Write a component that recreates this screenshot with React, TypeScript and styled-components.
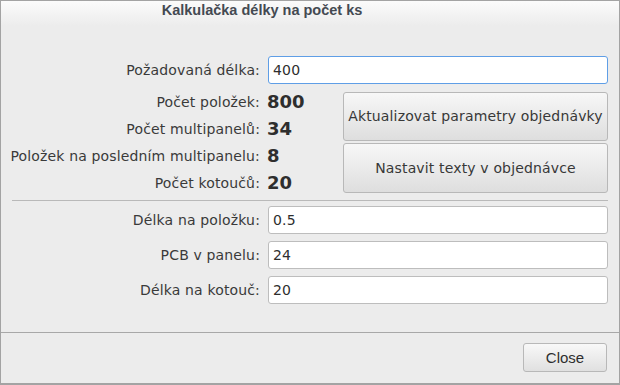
import styled, { createGlobalStyle } from 'styled-components'

const GlobalStyle = createGlobalStyle`
  html, body {
    margin: 0;
    padding: 0;
    background: #ececec;
  }
  * {
    box-sizing: border-box;
  }
`

const stats = [
  { label: 'Počet položek:', value: '800' },
  { label: 'Počet multipanelů:', value: '34' },
  { label: 'Položek na posledním multipanelu:', value: '8' },
  { label: 'Počet kotoučů:', value: '20' },
]

const params = [
  { label: 'Délka na položku:', value: '0.5' },
  { label: 'PCB v panelu:', value: '24' },
  { label: 'Délka na kotouč:', value: '20' },
]

const App = () => {
  return (
    <>
      <GlobalStyle />
      <Window>
        <TitleBar>Kalkulačka délky na počet ks</TitleBar>
        <Body>
          <FieldRow>
            <Label>Požadovaná délka:</Label>
            <Field defaultValue="400" $focused autoFocus />
          </FieldRow>
          <StatsArea>
            <StatsGrid>
              {stats.map((s) => (
                <StatRow key={s.label}>
                  <Label>{s.label}</Label>
                  <Value>{s.value}</Value>
                </StatRow>
              ))}
            </StatsGrid>
            <ButtonColumn>
              <BigButton $h={49}>Aktualizovat parametry objednávky</BigButton>
              <BigButton $h={50}>Nastavit texty v objednávce</BigButton>
            </ButtonColumn>
          </StatsArea>
          <Divider />
          <ParamList>
            {params.map((p) => (
              <FieldRow key={p.label}>
                <Label>{p.label}</Label>
                <Field defaultValue={p.value} />
              </FieldRow>
            ))}
          </ParamList>
        </Body>
        <Footer>
          <CloseButton>Close</CloseButton>
        </Footer>
      </Window>
    </>
  )
}

export default App

const Window = styled.div`
  width: 620px;
  height: 385px;
  border: 1px solid #a3a3a3;
  border-bottom-width: 2px;
  background: #ececec;
  display: flex;
  flex-direction: column;
  font-family: "DejaVu Sans", Verdana, sans-serif;
  color: #3a3a3a;
`

const TitleBar = styled.div`
  height: 25px;
  flex-shrink: 0;
  background: linear-gradient(#fbfbfb, #ececec);
  font-family: "Liberation Sans", Arial, sans-serif;
  font-weight: bold;
  font-size: 14.5px;
  color: #444a52;
  text-align: center;
  line-height: 19px;
  padding-right: 96px;
`

const Body = styled.div`
  flex: 1;
  padding: 30px 11px 0 0;
  display: flex;
  flex-direction: column;
`

const FieldRow = styled.div`
  display: flex;
  align-items: center;
  gap: 8px;
  height: 28px;
`

const Label = styled.div`
  width: 259px;
  flex-shrink: 0;
  text-align: right;
  font-size: 14px;
  letter-spacing: 0.15px;
  color: #3a3a3a;
  white-space: nowrap;
`

const Field = styled.input<{ $focused?: boolean }>`
  flex: 1;
  height: 28px;
  border: 1px solid ${({ $focused }) => ($focused ? '#5f9ee6' : '#bdbdbd')};
  border-radius: 3px;
  background: #fff;
  padding: 0 4px;
  font-family: "DejaVu Sans", Verdana, sans-serif;
  font-size: 14px;
  letter-spacing: 0.2px;
  color: #2e2e2e;
  outline: none;
  caret-color: #000;
`

const StatsArea = styled.div`
  display: flex;
  align-items: center;
  margin-top: 4px;
`

const StatsGrid = styled.div`
  display: flex;
  flex-direction: column;
  width: 342px;
`

const StatRow = styled.div`
  display: flex;
  align-items: center;
  gap: 7px;
  height: 27px;
`

const Value = styled.div`
  font-size: 18px;
  font-weight: bold;
  color: #2e2e2e;
`

const ButtonColumn = styled.div`
  flex: 1;
  display: flex;
  flex-direction: column;
  gap: 2px;
`

const BigButton = styled.button<{ $h: number }>`
  height: ${({ $h }) => $h}px;
  border: 1px solid #b8b8b8;
  border-radius: 3px;
  background: linear-gradient(#f7f7f7, #dedede);
  font-family: "DejaVu Sans", Verdana, sans-serif;
  font-size: 14px;
  letter-spacing: 0.15px;
  color: #383838;
  padding: 0;
`

const Divider = styled.div`
  height: 1px;
  background: #b9b9b9;
  margin: 4px 0 5px 11px;
`

const ParamList = styled.div`
  display: flex;
  flex-direction: column;
  gap: 7px;
`

const Footer = styled.div`
  height: 51px;
  flex-shrink: 0;
  border-top: 1px solid #a8a8a8;
  display: flex;
  justify-content: flex-end;
  align-items: flex-start;
  padding: 10px 12px 0 0;
`

const CloseButton = styled.button`
  width: 84px;
  height: 29px;
  border: 1px solid #b8b8b8;
  border-radius: 3px;
  background: linear-gradient(#f8f8f8, #e0e0e0);
  font-family: "Liberation Sans", Arial, sans-serif;
  font-size: 15px;
  color: #2e2e2e;
`
